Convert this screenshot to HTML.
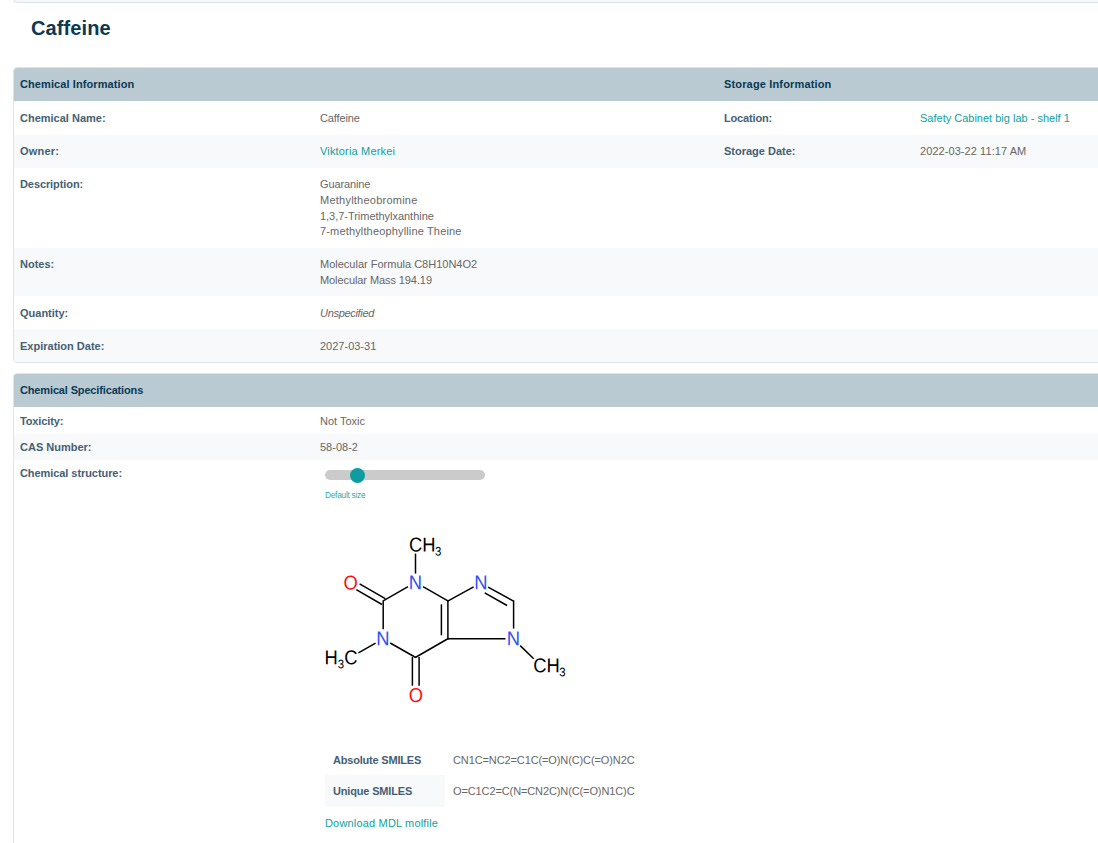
<!DOCTYPE html>
<html lang="en">
<head>
<meta charset="utf-8">
<title>Caffeine</title>
<style>
*{box-sizing:border-box}
html,body{margin:0;padding:0;background:#fff}
body{width:1098px;height:843px;overflow:hidden;position:relative;font-family:"Liberation Sans",sans-serif;font-size:11px;line-height:15.714px;color:#676767}
.topbox{position:absolute;left:13px;top:-20px;width:1200px;height:23px;background:#f5f7f8;border:1px solid #dde3e6;border-radius:4px}
h1{position:absolute;left:31px;top:15px;margin:0;font-size:20px;line-height:26px;font-weight:bold;color:#0b3954;letter-spacing:0.12px}
.panel{position:absolute;left:13px;width:1200px;border:1px solid #dde3e6;border-radius:4px;overflow:hidden;background:#fff}
#p1{top:67px}
#p2{top:373px;height:600px}
table{border-collapse:separate;border-spacing:0;table-layout:fixed;width:1198px}
th,td{text-align:left;vertical-align:top;padding:9px 6px 0 6px;font-weight:normal}
thead th{background:#b9cad2;color:#0b3954;font-weight:bold;height:33px;padding-top:9px}
tbody th{font-weight:bold;color:#466073}
tbody tr:nth-child(even) th, tbody tr:nth-child(even) td{background:#f7f9fa}
#p1 tbody tr{height:33px}
#p1 tbody tr.first{height:34px}
#p1 tbody tr.first th,#p1 tbody tr.first td{padding-top:10px}
#p1 tbody tr.r4{height:80px}
#p1 tbody tr.r2{height:48px}
#p1 tbody tr.p10 th,#p1 tbody tr.p10 td{padding-top:10px}
.l{height:16px;line-height:16px;white-space:nowrap;position:relative;top:-1px}
.l15{height:15px}
td .l:first-child{margin-top:0}
#p2 thead th{height:33px}
#p2 tbody th,#p2 tbody td{padding:6px 6px 0 6px}
#p2 tbody tr{height:26px}
#p2 tbody tr.t27{height:27px}
#p2 tbody tr.t27 th,#p2 tbody tr.t27 td{padding-top:7px}
.track{position:absolute;left:325px;top:470px;width:160px;height:10px;border-radius:5px;background:#cbcbcb}
.thumb{position:absolute;left:350px;top:467.5px;width:15px;height:15px;border-radius:50%;background:#0f9c9f}
.dsize{position:absolute;left:325px;top:489px;font-size:8.3px;line-height:12px;color:#30abab;letter-spacing:-0.25px;white-space:nowrap}
#mol{position:absolute;left:315px;top:525px}
#mol text{font-family:"Liberation Sans",sans-serif;font-size:20px}
#mol .s{font-size:12.4px}
#mol line{stroke:#000;stroke-width:1.5;stroke-linecap:butt}
.smi{position:absolute;left:325px;top:743px}
.smi .row{height:32px;display:flex}
.smi .h{width:120px;padding:9px 0 0 8px;font-weight:bold;color:#466073}
.smi .v{padding:9px 0 0 8px;white-space:nowrap}
.smi .row.alt .h{background:#f7f9fa}
.smi .row:first-child .h,.smi .row:first-child .v{padding-top:10px}
.dl{position:absolute;left:325px;top:816px;font-size:11px;color:#0f9fa0;white-space:nowrap}
a{color:#0f9fa0;text-decoration:none}
i{font-style:italic}
</style>
</head>
<body>
<div class="topbox"></div>
<h1>Caffeine</h1>

<div class="panel" id="p1">
<table>
<colgroup><col style="width:300px"><col style="width:404px"><col style="width:196px"><col></colgroup>
<thead><tr><th colspan="2"><span style="letter-spacing:0.092px">Chemical Information</span></th><th colspan="2"><span style="letter-spacing:0.156px">Storage Information</span></th></tr></thead>
<tbody>
<tr class="first"><th>Chemical Name:</th><td><span style="letter-spacing:-0.143px">Caffeine</span></td><th><span style="letter-spacing:-0.163px">Location:</span></th><td><a>Safety Cabinet big lab - shelf 1</a></td></tr>
<tr><th><span style="letter-spacing:0.200px">Owner:</span></th><td><a><span style="letter-spacing:0.171px">Viktoria Merkei</span></a></td><th>Storage Date:</th><td><span style="letter-spacing:0.072px">2022-03-22 11:17 AM</span></td></tr>
<tr class="r4"><th><span style="letter-spacing:-0.091px">Description:</span></th><td><div class="l"><span style="letter-spacing:-0.125px">Guaranine</span></div><div class="l"><span style="letter-spacing:0.237px">Methyltheobromine</span></div><div class="l l15"><span style="letter-spacing:-0.032px">1,3,7-Trimethylxanthine</span></div><div class="l"><span style="letter-spacing:0.154px">7-methyltheophylline Theine</span></div></td><th></th><td></td></tr>
<tr class="r2"><th>Notes:</th><td><div class="l">Molecular Formula C8H10N4O2</div><div class="l"><span style="letter-spacing:-0.085px">Molecular Mass 194.19</span></div></td><th></th><td></td></tr>
<tr class="p10"><th>Quantity:</th><td><i><span style="letter-spacing:-0.310px">Unspecified</span></i></td><th></th><td></td></tr>
<tr class="p10"><th>Expiration Date:</th><td>2027-03-31</td><th></th><td></td></tr>
</tbody>
</table>
</div>

<div class="panel" id="p2">
<table>
<colgroup><col style="width:300px"><col></colgroup>
<thead><tr><th colspan="2"><span style="letter-spacing:-0.148px">Chemical Specifications</span></th></tr></thead>
<tbody>
<tr class="t27"><th><span style="letter-spacing:-0.125px">Toxicity:</span></th><td>Not Toxic</td></tr>
<tr><th>CAS Number:</th><td>58-08-2</td></tr>
<tr><th><span style="letter-spacing:-0.069px">Chemical structure:</span></th><td></td></tr>
</tbody>
</table>
</div>

<div class="track"></div><div class="thumb"></div>
<div class="dsize">Default size</div>
<svg id="mol" width="260" height="195" viewBox="315 525 260 195">
<g>
<line x1="415.5" y1="553.6" x2="415.5" y2="573.6"/>
<line x1="408" y1="586.6" x2="383.2" y2="600.9"/>
<line x1="423" y1="586.6" x2="447.9" y2="600.9"/>
<line x1="383.2" y1="600.4" x2="383.2" y2="629.2"/>
<line x1="359.6" y1="583.9" x2="385.3" y2="598.7"/>
<line x1="356.3" y1="589.7" x2="382" y2="604.5"/>
<line x1="447.9" y1="600.4" x2="447.9" y2="639.4"/>
<line x1="441.4" y1="604.3" x2="441.4" y2="635.3"/>
<line x1="390.2" y1="643" x2="415.7" y2="657.5"/>
<line x1="415.3" y1="657.5" x2="448.3" y2="638.5"/>
<line x1="375.6" y1="643.2" x2="358.4" y2="652.9"/>
<line x1="412.4" y1="657" x2="412.4" y2="685.7"/>
<line x1="419.1" y1="657" x2="419.1" y2="685.7"/>
<line x1="447.7" y1="601.2" x2="473.6" y2="586.8"/>
<line x1="488.1" y1="587.2" x2="514" y2="601.3"/>
<line x1="484.7" y1="592.9" x2="507.1" y2="605.5"/>
<line x1="513.6" y1="600.6" x2="513.6" y2="628.6"/>
<line x1="447.2" y1="638.8" x2="505.5" y2="638.8"/>
<line x1="520.2" y1="645.6" x2="533.7" y2="658.7"/>
</g>
<text transform="translate(408.98 551.60) rotate(0.03) scale(0.92 1)">CH<tspan class="s" dy="4" dx="-0.6">3</tspan></text>
<text transform="translate(408.73 589.30) rotate(0.03) scale(0.92 1)" fill="#3050f8">N</text>
<text transform="translate(343.54 589.50) rotate(0.03) scale(0.92 1)" fill="#ff0d0d">O</text>
<text transform="translate(376.33 645.20) rotate(0.03) scale(0.92 1)" fill="#3050f8">N</text>
<text transform="translate(474.33 589.30) rotate(0.03) scale(0.92 1)" fill="#3050f8">N</text>
<text transform="translate(506.63 645.30) rotate(0.03) scale(0.92 1)" fill="#3050f8">N</text>
<text transform="translate(408.74 701.90) rotate(0.03) scale(0.92 1)" fill="#ff0d0d">O</text>
<text transform="translate(324.56 664.30) rotate(0.03) scale(0.92 1)">H<tspan class="s" dy="4">3</tspan><tspan dy="-4">C</tspan></text>
<text transform="translate(533.28 672.20) rotate(0.03) scale(0.92 1)">CH<tspan class="s" dy="4" dx="-0.6">3</tspan></text>
</svg>
<div class="smi">
<div class="row"><div class="h"><span style="letter-spacing:-0.200px">Absolute SMILES</span></div><div class="v"><span style="letter-spacing:-0.111px">CN1C=NC2=C1C(=O)N(C)C(=O)N2C</span></div></div>
<div class="row alt"><div class="h"><span style="letter-spacing:-0.167px">Unique SMILES</span></div><div class="v"><span style="letter-spacing:-0.111px">O=C1C2=C(N=CN2C)N(C(=O)N1C)C</span></div></div>
</div>
<div class="dl"><span style="letter-spacing:0.174px">Download MDL molfile</span></div>
</body>
</html>
